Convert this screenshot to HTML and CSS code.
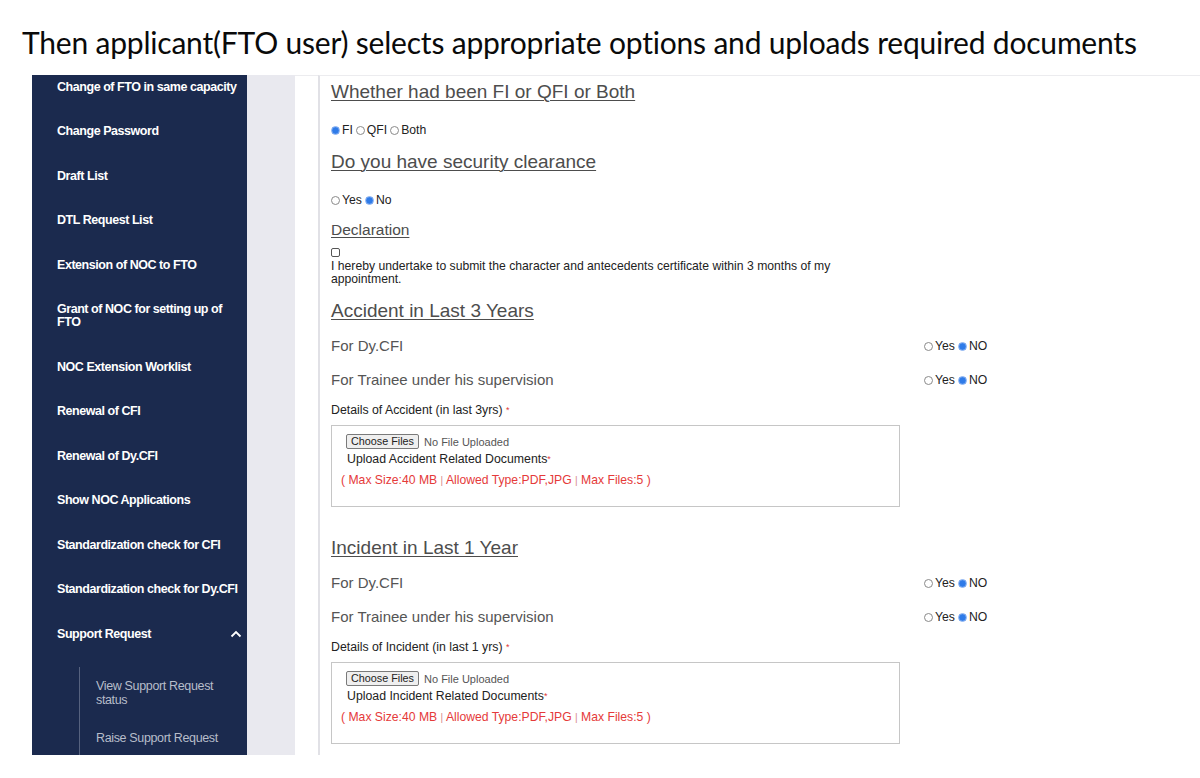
FILE: index.html
```html
<!DOCTYPE html>
<html lang="en">
<head>
<meta charset="utf-8">
<title>FTO application</title>
<link rel="stylesheet" href="styles.css">
</head>
<body>
<div class="title">Then applicant(FTO user) selects appropriate options and uploads required documents</div>
<div class="screen">
  <nav class="sidebar">
    <ul class="menu">
      <li>Change of FTO in same capacity</li>
      <li>Change Password</li>
      <li>Draft List</li>
      <li>DTL Request List</li>
      <li>Extension of NOC to FTO</li>
      <li>Grant of NOC for setting up of<br>FTO</li>
      <li>NOC Extension Worklist</li>
      <li>Renewal of CFI</li>
      <li>Renewal of Dy.CFI</li>
      <li>Show NOC Applications</li>
      <li>Standardization check for CFI</li>
      <li>Standardization check for Dy.CFI</li>
      <li class="has-sub"><span>Support Request</span><svg class="chev" width="12" height="8" viewBox="0 0 12 8"><polyline points="1.5,6.5 6,2 10.5,6.5" fill="none" stroke="#ffffff" stroke-width="1.8"/></svg></li>
    </ul>
    <ul class="submenu">
      <li>View Support Request<br>status</li>
      <li>Raise Support Request</li>
    </ul>
  </nav>
  <div class="gutter"></div>
  <div class="spacer"></div>
  <main class="content">
    <div class="heading">Whether had been FI or QFI or Both</div>
    <div class="radios">
      <span class="radio on"></span><span class="opt">FI</span>
      <span class="radio"></span><span class="opt">QFI</span>
      <span class="radio"></span><span class="opt">Both</span>
    </div>
    <div class="heading">Do you have security clearance</div>
    <div class="radios">
      <span class="radio"></span><span class="opt">Yes</span>
      <span class="radio on"></span><span class="opt">No</span>
    </div>
    <div class="subheading">Declaration</div>
    <div class="check-row"><span class="checkbox"></span></div>
    <div class="declaration">I hereby undertake to submit the character and antecedents certificate within 3 months of my<br>appointment.</div>

    <div class="heading">Accident in Last 3 Years</div>
    <div class="question">
      <span class="qlabel">For Dy.CFI</span>
      <span class="radios inline"><span class="radio"></span><span class="opt">Yes</span><span class="radio on"></span><span class="opt">NO</span></span>
    </div>
    <div class="question">
      <span class="qlabel">For Trainee under his supervision</span>
      <span class="radios inline"><span class="radio"></span><span class="opt">Yes</span><span class="radio on"></span><span class="opt">NO</span></span>
    </div>
    <div class="details">Details of Accident (in last 3yrs) <span class="req">*</span></div>
    <div class="upload-box">
      <div class="file-row"><span class="file-btn">Choose Files</span><span class="file-none">No File Uploaded</span></div>
      <div class="upload-label">Upload Accident Related Documents<span class="req">*</span></div>
      <div class="limits">( Max Size:40 MB <span class="sep">|</span> Allowed Type:PDF,JPG <span class="sep">|</span> Max Files:5 )</div>
    </div>

    <div class="heading">Incident in Last 1 Year</div>
    <div class="question">
      <span class="qlabel">For Dy.CFI</span>
      <span class="radios inline"><span class="radio"></span><span class="opt">Yes</span><span class="radio on"></span><span class="opt">NO</span></span>
    </div>
    <div class="question">
      <span class="qlabel">For Trainee under his supervision</span>
      <span class="radios inline"><span class="radio"></span><span class="opt">Yes</span><span class="radio on"></span><span class="opt">NO</span></span>
    </div>
    <div class="details">Details of Incident (in last 1 yrs) <span class="req">*</span></div>
    <div class="upload-box">
      <div class="file-row"><span class="file-btn">Choose Files</span><span class="file-none">No File Uploaded</span></div>
      <div class="upload-label">Upload Incident Related Documents<span class="req">*</span></div>
      <div class="limits">( Max Size:40 MB <span class="sep">|</span> Allowed Type:PDF,JPG <span class="sep">|</span> Max Files:5 )</div>
    </div>
  </main>
</div>
</body>
</html>
```

FILE: styles.css
```css
* { box-sizing: border-box; }

html, body {
  margin: 0;
  padding: 0;
  background: #ffffff;
}

body {
  width: 1200px;
  height: 778px;
  overflow: hidden;
  font-family: "Liberation Sans", Arial, sans-serif;
}

.title {
  height: 75px;
  padding: 24px 0 0 22px;
  font-family: Lato, "Open Sans", sans-serif;
  font-size: 30px;
  line-height: 36px;
  letter-spacing: -0.2px;
  color: #0a0a0a;
  white-space: nowrap;
}

.screen {
  display: flex;
  height: 680px;
  padding-left: 32px;
}

/* ---------- sidebar ---------- */
.sidebar {
  width: 215px;
  flex: 0 0 215px;
  background: #1b2a4e;
  overflow: hidden;
  display: flex;
  flex-direction: column;
}

.menu, .submenu {
  list-style: none;
  margin: 0;
  padding: 0;
}

.menu {
  margin-top: -10.25px;
}

.menu li {
  padding: 15.75px 0 15.75px 25px;
  font-size: 12.5px;
  line-height: 13px;
  font-weight: bold;
  letter-spacing: -0.45px;
  color: #ffffff;
}

.menu li.has-sub {
  display: flex;
  align-items: center;
  justify-content: space-between;
  padding-right: 5px;
}

.chev {
  display: block;
}

.submenu {
  flex: 1;
  margin: 11px 0 0 47px;
  padding: 12px 0 0 16px;
  border-left: 1px solid #56627f;
  display: flex;
  flex-direction: column;
  gap: 24px;
}

.submenu li {
  font-size: 12.5px;
  line-height: 14px;
  letter-spacing: -0.35px;
  color: #b7bdca;
}

.gutter {
  width: 48px;
  flex: 0 0 48px;
  background: #e9e9ef;
}

.spacer {
  width: 23px;
  flex: 0 0 23px;
  border-top: 1px solid #ececef;
}

/* ---------- content ---------- */
.content {
  flex: 1;
  border-left: 2px solid #e1e1e6;
  border-top: 1px solid #ececef;
  padding-left: 11px;
  color: #222;
}

.heading {
  margin-top: 14px;
  font-size: 19px;
  line-height: 22px;
  color: #4d4d4d;
  text-decoration: underline;
  text-decoration-thickness: 1px;
  text-underline-offset: 2px;
}

.content > .heading:first-child {
  margin-top: 5px;
}

.upload-box + .heading {
  margin-top: 30px;
}

.radios {
  margin-top: 20px;
  display: flex;
  align-items: center;
  font-size: 12.2px;
  line-height: 14px;
  color: #222;
}

.radios.inline {
  margin-top: 0;
}

.radio {
  width: 9px;
  height: 9px;
  border-radius: 50%;
  border: 1px solid #8a8a8a;
  background: #fff;
  margin-right: 2px;
}

.radio.on {
  border-color: #7eaaf0;
  background: radial-gradient(circle, #2f7be8 0 55%, #5b98ee 70%);
}

.opt {
  margin-right: 3px;
}

.subheading {
  margin-top: 14px;
  font-size: 15.5px;
  line-height: 18px;
  color: #4d4d4d;
  text-decoration: underline;
  text-decoration-thickness: 1px;
  text-underline-offset: 2px;
}

.check-row {
  margin-top: 7px;
  height: 12px;
  display: flex;
  align-items: center;
}

.checkbox {
  width: 9px;
  height: 9px;
  border: 1px solid #555;
  border-radius: 2px;
  background: #fff;
}

.declaration {
  margin-top: 2px;
  font-size: 12.2px;
  line-height: 13px;
  color: #222;
}

.question {
  margin-top: 14px;
  display: flex;
  align-items: center;
  height: 20px;
}

.qlabel {
  flex: 0 0 593px;
  font-size: 15px;
  line-height: 20px;
  color: #555;
}

.details {
  margin-top: 13px;
  font-size: 12.3px;
  line-height: 14px;
  color: #222;
}

.req {
  color: #e03a3a;
  font-size: 9px;
  vertical-align: 1px;
}

.upload-box {
  margin-top: 8px;
  width: 569px;
  height: 82px;
  border: 1px solid #c6c6c6;
  padding: 8px 0 0 14px;
}

.file-row {
  display: flex;
  align-items: center;
  height: 15px;
}

.file-btn {
  font-size: 10.8px;
  line-height: 13px;
  padding: 0 4px;
  border: 1px solid #7a7a7a;
  border-radius: 2px;
  background: #efefef;
  color: #222;
}

.file-none {
  margin-left: 5px;
  font-size: 11px;
  color: #555;
}

.upload-label {
  margin-top: 3px;
  margin-left: 1px;
  font-size: 12.3px;
  line-height: 14px;
  color: #222;
}

.limits {
  margin-top: 7px;
  margin-left: -5px;
  font-size: 12.2px;
  line-height: 14px;
  color: #e53a3a;
}

.sep {
  color: #d88a8a;
  font-size: 10px;
}
```
